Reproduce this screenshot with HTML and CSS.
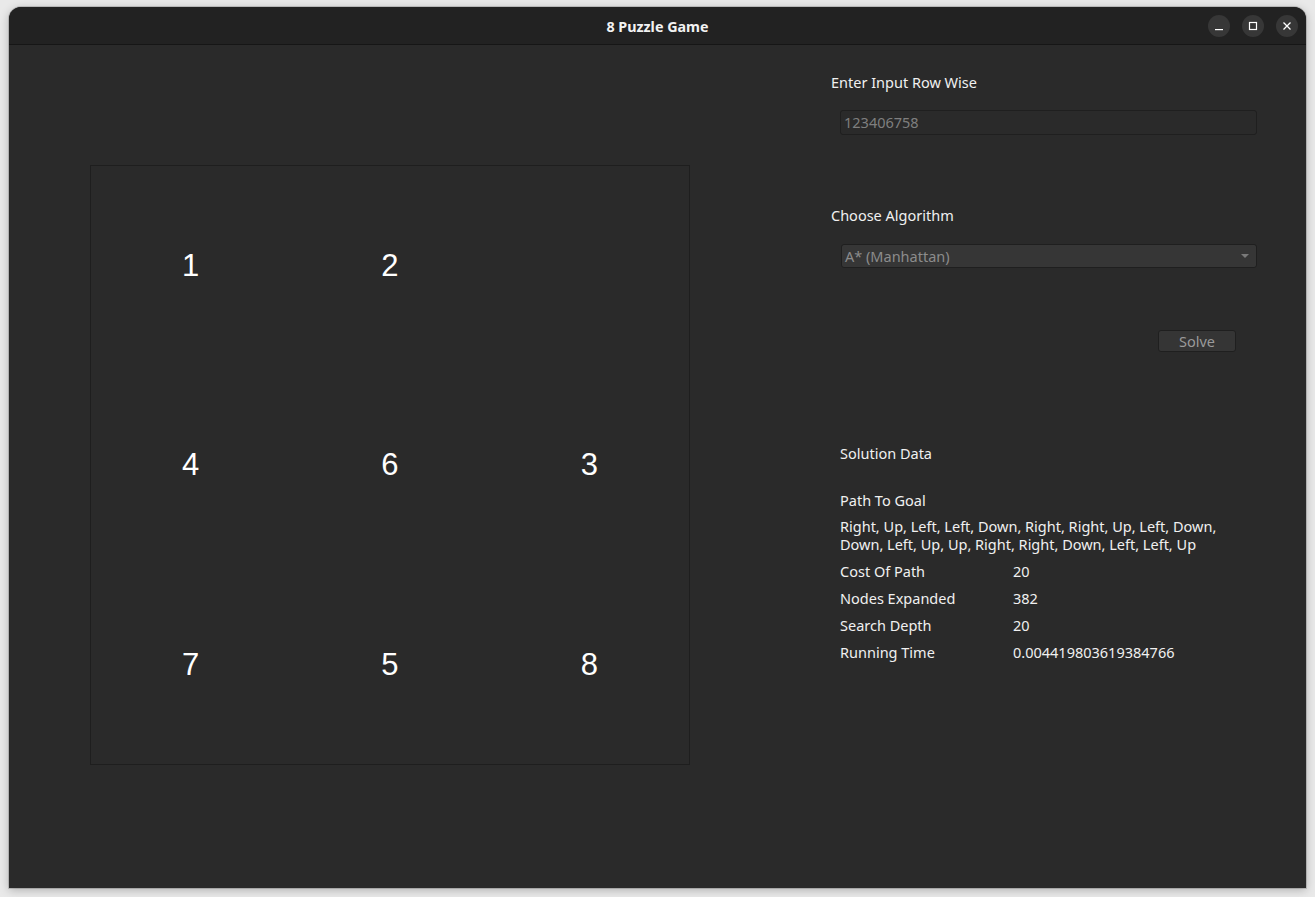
FILE: index.html
```html
<!DOCTYPE html>
<html>
<head>
<meta charset="utf-8">
<link rel="stylesheet" href="styles.css">
</head>
<body>
<div class="window">
  <div class="titlebar">
    <div class="title">8 Puzzle Game</div>
    <div class="controls">
      <span class="wbtn"><svg width="10" height="10" viewBox="0 0 10 10"><rect x="1" y="8" width="8" height="1.2" fill="#fff"/></svg></span>
      <span class="wbtn"><svg width="10" height="10" viewBox="0 0 10 10"><rect x="1.5" y="1.5" width="7" height="7" fill="none" stroke="#fff" stroke-width="1.2"/></svg></span>
      <span class="wbtn"><svg width="10" height="10" viewBox="0 0 10 10"><path d="M1.5 1.5L8.5 8.5M8.5 1.5L1.5 8.5" stroke="#fff" stroke-width="1.3"/></svg></span>
    </div>
  </div>
  <div class="content">
    <div class="board">
      <div class="cell">1</div>
      <div class="cell">2</div>
      <div class="cell"></div>
      <div class="cell">4</div>
      <div class="cell">6</div>
      <div class="cell">3</div>
      <div class="cell">7</div>
      <div class="cell">5</div>
      <div class="cell">8</div>
    </div>
    <div class="panel">
      <div class="label label-input">Enter Input Row Wise</div>
      <div class="input">123406758</div>
      <div class="label label-algo">Choose Algorithm</div>
      <div class="combo"><span>A* (Manhattan)</span><span class="arrow"></span></div>
      <div class="solve-row"><div class="solve">Solve</div></div>
      <div class="solution">
        <div class="sol-title">Solution Data</div>
        <div class="path-title">Path To Goal</div>
        <div class="path">Right, Up, Left, Left, Down, Right, Right, Up, Left, Down,<br>Down, Left, Up, Up, Right, Right, Down, Left, Left, Up</div>
        <div class="row"><span class="key">Cost Of Path</span><span>20</span></div>
        <div class="row"><span class="key">Nodes Expanded</span><span>382</span></div>
        <div class="row"><span class="key">Search Depth</span><span>20</span></div>
        <div class="row"><span class="key">Running Time</span><span>0.004419803619384766</span></div>
      </div>
    </div>
  </div>
</div>
</body>
</html>
```
FILE: styles.css
```css
html, body {
  margin: 0;
  padding: 0;
}
body {
  background: #e9e9e9;
  width: 1315px;
  height: 897px;
  overflow: hidden;
  font-family: "Noto Sans", "Open Sans", sans-serif;
}
.window {
  margin: 7px 0 0 9px;
  width: 1297px;
  height: 881px;
  background: #2a2a2a;
  border-radius: 12px 12px 0 0;
  box-shadow: 0 2px 10px rgba(0,0,0,0.25), 0 0 0 1px rgba(0,0,0,0.15);
  overflow: hidden;
  display: flex;
  flex-direction: column;
}
.titlebar {
  height: 37px;
  flex: none;
  background: #222222;
  border-bottom: 1px solid #161616;
  position: relative;
  display: flex;
  align-items: center;
  justify-content: center;
}
.title {
  color: #f2f2f2;
  font-weight: bold;
  font-size: 14.3px;
  margin-top: 2px;
}
.controls {
  position: absolute;
  right: 8px;
  top: 8px;
  display: flex;
  gap: 12px;
}
.wbtn {
  width: 22px;
  height: 22px;
  border-radius: 50%;
  background: #373737;
  display: flex;
  align-items: center;
  justify-content: center;
}
.content {
  flex: 1;
  display: flex;
}
.board {
  margin: 120px 0 0 81px;
  width: 598px;
  height: 598px;
  border: 1px solid #1e1e1e;
  display: grid;
  grid-template-columns: repeat(3, 1fr);
  grid-template-rows: repeat(3, 1fr);
  flex: none;
}
.cell {
  display: flex;
  align-items: center;
  justify-content: center;
  color: #ffffff;
  font-family: "Liberation Sans", Arial, sans-serif;
  font-size: 31px;
  padding-top: 1px;
}
.panel {
  margin-left: 141px;
  width: 420px;
  color: #f0f0f0;
  font-size: 14.5px;
}
.label {
  line-height: 20px;
}
.label-input {
  margin-top: 27px;
}
.input {
  margin: 18px 0 0 9px;
  width: 412px;
  height: 23px;
  border: 1px solid #1f1f1f;
  border-radius: 3px;
  background: #2a2a2a;
  color: #7f7f7f;
  padding-left: 3px;
  line-height: 23px;
}
.label-algo {
  margin-top: 70px;
}
.combo {
  margin: 19px 0 0 10px;
  width: 411px;
  height: 21px;
  border: 1px solid #1f1f1f;
  border-radius: 3px;
  background: #363636;
  color: #8c8c8c;
  padding-left: 3px;
  padding-bottom: 1px;
  box-sizing: content-box;
  display: flex;
  align-items: center;
  justify-content: space-between;
}
.arrow {
  width: 0;
  height: 0;
  border-left: 4px solid transparent;
  border-right: 4px solid transparent;
  border-top: 4px solid #7a7a7a;
  margin-right: 7px;
}
.solve-row {
  display: flex;
  justify-content: flex-end;
  margin-top: 62px;
  padding-right: 15px;
}
.solve {
  width: 76px;
  height: 20px;
  border: 1px solid #1f1f1f;
  border-radius: 3px;
  background: #353535;
  color: #9a9a9a;
  text-align: center;
  line-height: 20px;
}
.solution {
  margin: 92px 0 0 9px;
  line-height: 18px;
}
.path-title {
  margin-top: 29px;
}
.path {
  margin-top: 8px;
}
.row {
  margin-top: 9px;
  display: flex;
}
.key {
  width: 173px;
}
```
